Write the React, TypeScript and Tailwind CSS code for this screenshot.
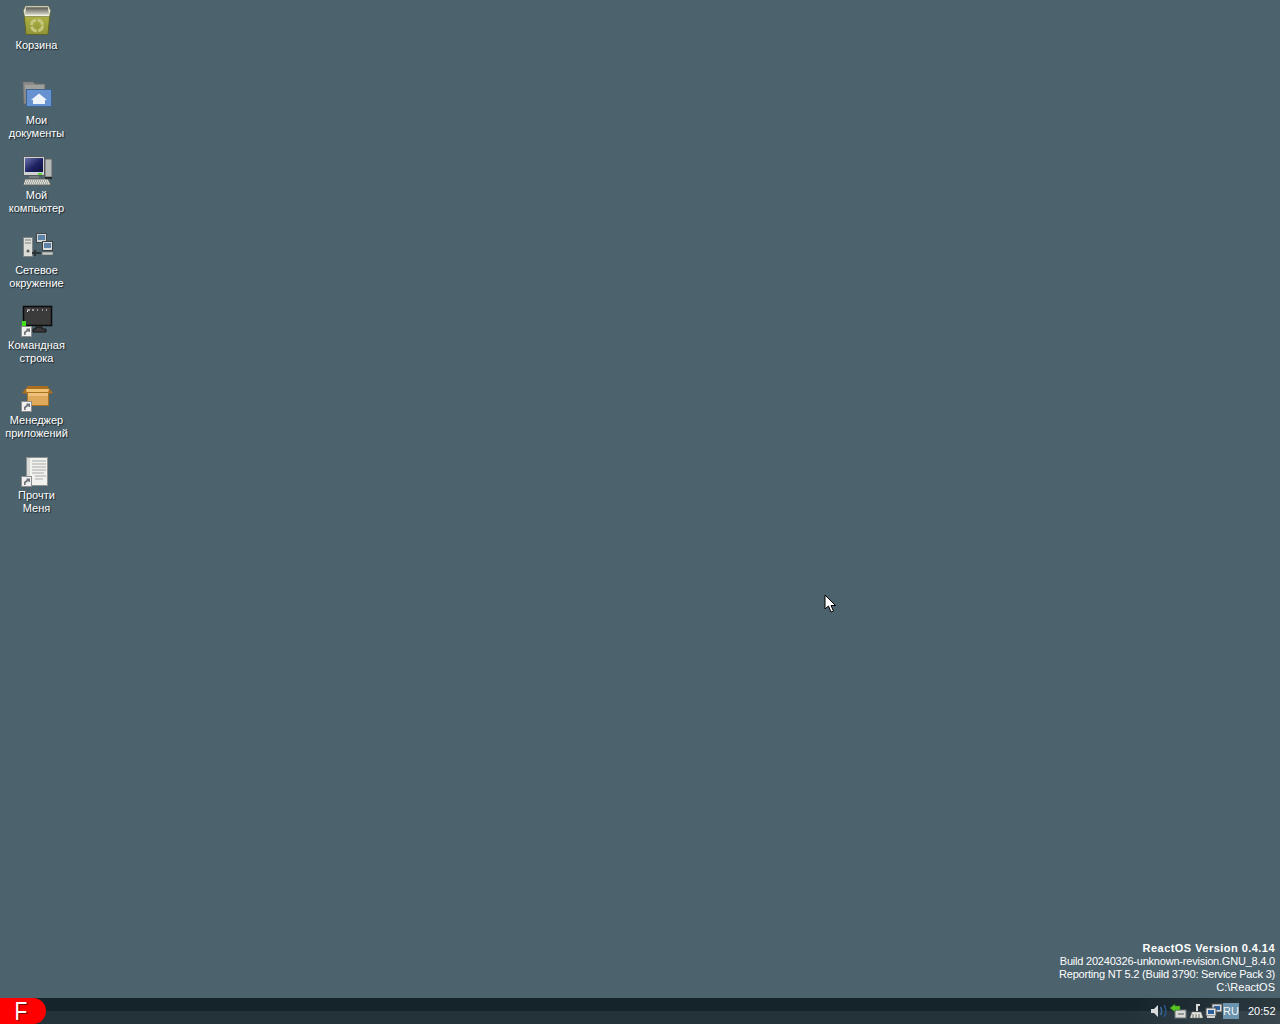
import React from 'react';

const FONT = "font-['Liberation_Sans',sans-serif]";

function Shortcut() {
  return (
    <svg className="absolute bottom-0 left-0" width="11" height="11" viewBox="0 0 11 11">
      <rect x="0.5" y="0.5" width="10" height="10" fill="#f0f0f0" stroke="#8c8c8c" />
      <path d="M3 9V6L5.5 4V2.5L9 2.5V6H7.5V4.8L4.6 7V9Z" fill="#6e7378" />
    </svg>
  );
}

function Trash() {
  return (
    <svg width="32" height="32" viewBox="0 0 32 32">
      <defs>
        <linearGradient id="trash-in" x1="0" y1="0" x2="0" y2="1">
          <stop offset="0" stopColor="#55554f" />
          <stop offset="1" stopColor="#d6d6ca" />
        </linearGradient>
        <linearGradient id="trash-body" x1="0" y1="0" x2="0" y2="1">
          <stop offset="0" stopColor="#b4b746" />
          <stop offset="1" stopColor="#8f9437" />
        </linearGradient>
      </defs>
      <path d="M3 8L5 29.5H27L29 8Z" fill="url(#trash-body)" stroke="#5f6426" />
      <path d="M2.5 5.5L4.5 1H27.5L29.5 5.5L28.5 11.5H3.5Z" fill="#f1f3e2" stroke="#6a6d3c" strokeWidth="0.6" />
      <path d="M5 2.2H27L28 9.8H4Z" fill="url(#trash-in)" />
      <circle cx="16" cy="20.5" r="5.5" fill="none" stroke="#c4c77c" strokeWidth="3" strokeDasharray="7 1.6" />
    </svg>
  );
}

function Folder() {
  return (
    <svg width="32" height="32" viewBox="0 0 32 32">
      <path d="M2 2H12L14 4H24V24H3Z" fill="#8a8b88" stroke="#6e6f6c" strokeWidth="0.6" />
      <path d="M4 6H23M4 8H23" stroke="#b4b4b0" />
      <rect x="5.5" y="9.5" width="25" height="17" fill="#6692d2" stroke="#3f648f" />
      <path d="M10 20L18 13.5L26 20H24V24H12V20Z" fill="#eef3fa" />
    </svg>
  );
}

function Computer() {
  return (
    <svg width="32" height="32" viewBox="0 0 32 32">
      <defs>
        <linearGradient id="screen" x1="0" y1="0" x2="1" y2="1">
          <stop offset="0" stopColor="#6b74ad" />
          <stop offset="0.55" stopColor="#1d2160" />
          <stop offset="1" stopColor="#10123e" />
        </linearGradient>
      </defs>
      <rect x="24" y="4" width="7" height="18" fill="#b4b9b7" stroke="#5e6362" />
      <rect x="2.5" y="1.5" width="21" height="19" fill="#d0d3d2" stroke="#555a5c" />
      <rect x="4" y="3" width="18" height="14" fill="url(#screen)" />
      <rect x="17" y="18" width="4" height="2" fill="#5fd03c" />
      <rect x="8" y="21" width="10" height="2" fill="#777b79" />
      <path d="M4 24H27L30 30H2Z" fill="#d9dbd5" stroke="#5f635f" />
      <path d="M5 26H26M4 28H27" stroke="#737773" strokeDasharray="1 1" />
      <rect x="24" y="22" width="7" height="2" fill="#23282b" />
    </svg>
  );
}

function Network() {
  return (
    <svg width="32" height="32" viewBox="0 0 32 32">
      <rect x="2.5" y="7.5" width="9" height="19" fill="#dcdcd8" stroke="#808482" />
      <path d="M4 10H10M4 13H10" stroke="#7c7f7e" />
      <circle cx="7" cy="21" r="1.5" fill="#55595a" />
      <path d="M11 23H20M14 20V26" stroke="#2d3236" strokeWidth="2" />
      <rect x="15.5" y="3.5" width="10" height="9" fill="#d0d4d4" stroke="#44484a" />
      <rect x="17" y="5" width="7" height="5" fill="#5d84a8" />
      <rect x="21.5" y="11.5" width="10" height="9" fill="#dadddd" stroke="#3e4244" />
      <rect x="23" y="13" width="7" height="5" fill="#5d84a8" />
      <rect x="21" y="22" width="11" height="3" fill="#c9cdc9" stroke="#5f6361" strokeWidth="0.6" />
    </svg>
  );
}

function Cmd() {
  return (
    <svg width="32" height="32" viewBox="0 0 32 32">
      <rect x="2.5" y="1.5" width="28" height="19" fill="#3b3b3b" stroke="#0b0b0b" strokeWidth="1.5" />
      <path d="M6 5H9M11 5H13M16 5H17M21 5H22M25 5H26M6 6.5H7" stroke="#fff" />
      <path d="M15 22H21V24H25V27H12V24H15Z" fill="#3a3a3a" stroke="#111" />
      <rect x="1" y="16" width="4" height="5" fill="#3fe01b" />
    </svg>
  );
}

function Box() {
  return (
    <svg width="32" height="32" viewBox="0 0 32 32">
      <path d="M1 13L7 6H26L32 13L27 14H6Z" fill="#a96f1e" />
      <path d="M5 9H28L27 13H6Z" fill="#f0c272" />
      <rect x="6.5" y="12.5" width="21" height="13" fill="#dfa95c" stroke="#a87424" />
      <rect x="7" y="13" width="20" height="3" fill="#efc17a" />
    </svg>
  );
}

function Readme() {
  return (
    <svg width="32" height="32" viewBox="0 0 32 32">
      <rect x="5.5" y="2.5" width="21" height="28" fill="#f1f1ee" stroke="#8e9190" />
      <rect x="6" y="3" width="3" height="27" fill="#d8dad8" />
      <path d="M11 6H25M11 9H25M11 12H25M11 15H25M11 18H23M14 21H25M14 24H22" stroke="#a9acab" />
    </svg>
  );
}

const ICONS: { lines: string[]; icon: React.ReactNode; shortcut?: boolean }[] = [
  { lines: ['Корзина'], icon: <Trash /> },
  { lines: ['Мои', 'документы'], icon: <Folder /> },
  { lines: ['Мой', 'компьютер'], icon: <Computer /> },
  { lines: ['Сетевое', 'окружение'], icon: <Network /> },
  { lines: ['Командная', 'строка'], icon: <Cmd />, shortcut: true },
  { lines: ['Менеджер', 'приложений'], icon: <Box />, shortcut: true },
  { lines: ['Прочти', 'Меня'], icon: <Readme />, shortcut: true },
];

function Tray() {
  return (
    <div className="flex h-full items-center bg-[linear-gradient(to_right,#ffffff00,#ffffff1a)] pl-[20px]">
      <svg width="20" height="16" viewBox="0 0 20 16">
        <path d="M1 6H4L8 2V14L4 10H1Z" fill="#d8dcdc" />
        <path d="M10.5 4C12 6 12 10 10.5 12" stroke="#3a6ca3" strokeWidth="1.5" fill="none" />
        <path d="M14 2C16.5 5 16.5 11 14 14" stroke="#2a5587" strokeWidth="1.5" fill="none" />
      </svg>
      <svg width="18" height="16" viewBox="0 0 18 16">
        <rect x="5" y="7" width="11" height="8" fill="#d6d9d6" stroke="#6d7170" />
        <path d="M8 11H14" stroke="#555" />
        <path d="M0 5L5 1V3H10V7H5V9Z" fill="#58c428" stroke="#2e7a10" strokeWidth="0.5" />
      </svg>
      <svg width="17" height="16" viewBox="0 0 17 16">
        <path d="M8 1H12V3H10V8H8Z" fill="#d8d8d4" />
        <path d="M4 9H13L15 15H2Z" fill="#e6e6e0" stroke="#777" strokeWidth="0.5" />
        <path d="M5 11V15M8 11V15M11 11V15" stroke="#666" />
      </svg>
      <svg width="18" height="16" viewBox="0 0 18 16">
        <rect x="7" y="1" width="10" height="8" fill="#d5d9d9" stroke="#555" />
        <rect x="9" y="3" width="6" height="4" fill="#2c5f9e" />
        <rect x="1" y="5" width="10" height="8" fill="#e2e4e2" stroke="#555" />
        <rect x="3" y="7" width="6" height="4" fill="#2c5f9e" />
        <rect x="2" y="13" width="8" height="2" fill="#cfd2cf" />
      </svg>
      <span className="flex h-[16px] w-[16px] items-center justify-center bg-[#6b93ad] text-[11px] leading-none text-[#eef3f6]">RU</span>
      <span className="ml-[9px] mr-[5px] w-[27px] text-right text-[11px] leading-none text-white">20:52</span>
    </div>
  );
}

export default function App() {
  return (
    <div className={`${FONT} relative flex h-[1024px] w-[1280px] flex-col overflow-hidden bg-[#4c626d] text-[11px] leading-[13px] text-white`}>
      <main className="relative flex min-h-0 flex-1 flex-col justify-between">
        <div className="flex w-[73px] flex-col pt-[5px]">
          {ICONS.map((item) => (
            <div key={item.lines[0]} className="flex h-[75px] flex-col items-center">
              <div className="relative h-[32px] w-[32px]">
                {item.icon}
                {item.shortcut && <Shortcut />}
              </div>
              <div className="mt-[2px] text-center [text-shadow:1px_1px_1px_#1a2429]">
                {item.lines.map((line) => (
                  <div key={line}>{line}</div>
                ))}
              </div>
            </div>
          ))}
        </div>
        <div className="self-end pb-[4px] pr-[5px] text-right">
          <div className="font-bold tracking-[0.46px]">ReactOS Version 0.4.14</div>
          <div className="tracking-[-0.21px]">Build 20240326-unknown-revision.GNU_8.4.0</div>
          <div className="tracking-[-0.21px]">Reporting NT 5.2 (Build 3790: Service Pack 3)</div>
          <div>C:\ReactOS</div>
        </div>
        <svg className="absolute left-[824px] top-[594px]" width="12" height="20" viewBox="0 0 12 20">
          <path d="M1 1V15L4.5 12L7 18L9.5 17L7 11.5H11.5Z" fill="#fff" stroke="#000" />
        </svg>
      </main>
      <footer className="relative flex h-[26px] shrink-0 items-center justify-between bg-[linear-gradient(to_bottom,#15232a_0,#15232a_50%,#24323a_50%,#24323a_100%)]">
        <div className="flex h-[26px] w-[46px] items-center justify-center rounded-r-[13px] bg-[#ff0000] pr-[5px]">
          <span className="scale-x-[0.8] text-[26px] font-normal leading-[26px] text-white [text-shadow:1px_1px_0_#800000]">F</span>
        </div>
        <Tray />
      </footer>
    </div>
  );
}
